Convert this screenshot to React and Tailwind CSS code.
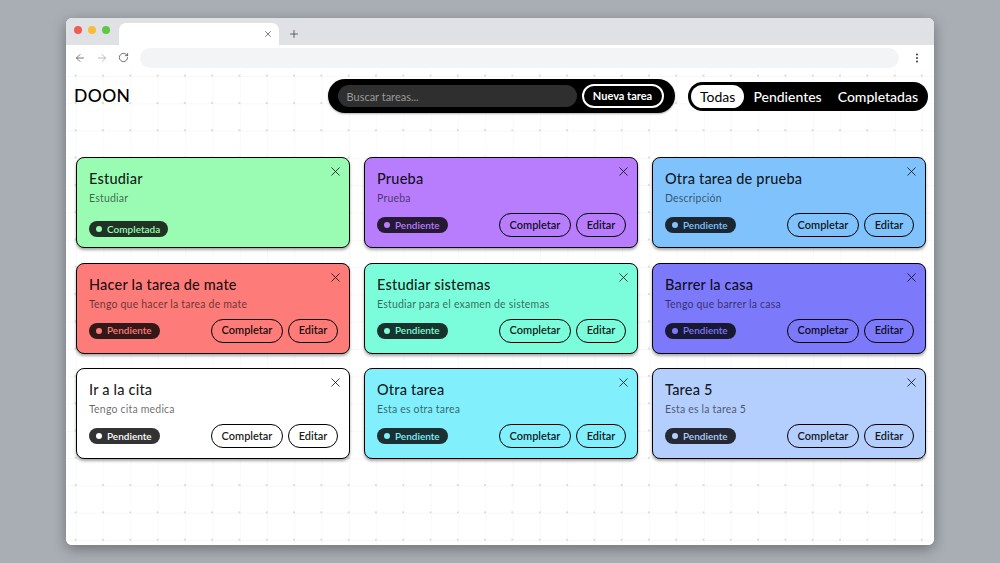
import React from 'react';
import { ArrowLeft, ArrowRight, RotateCw, X, Plus, EllipsisVertical } from 'lucide-react';

const tasks = [
  { title: 'Estudiar', desc: 'Estudiar', done: true, bg: 'bg-[#9afbb2]', accent: 'text-[#9afbb2]', dot: 'bg-[#9afbb2]' },
  { title: 'Prueba', desc: 'Prueba', bg: 'bg-[#b77dfc]', accent: 'text-[#b77dfc]', dot: 'bg-[#b77dfc]' },
  { title: 'Otra tarea de prueba', desc: 'Descripción', bg: 'bg-[#80c3fc]', accent: 'text-[#80c3fc]', dot: 'bg-[#80c3fc]' },
  { title: 'Hacer la tarea de mate', desc: 'Tengo que hacer la tarea de mate', bg: 'bg-[#fd7b79]', accent: 'text-[#fd7b79]', dot: 'bg-[#fd7b79]' },
  { title: 'Estudiar sistemas', desc: 'Estudiar para el examen de sistemas', bg: 'bg-[#7bfcda]', accent: 'text-[#7bfcda]', dot: 'bg-[#7bfcda]' },
  { title: 'Barrer la casa', desc: 'Tengo que barrer la casa', bg: 'bg-[#7c79fb]', accent: 'text-[#7c79fb]', dot: 'bg-[#7c79fb]' },
  { title: 'Ir a la cita', desc: 'Tengo cita medica', bg: 'bg-white', accent: 'text-white', dot: 'bg-white' },
  { title: 'Otra tarea', desc: 'Esta es otra tarea', bg: 'bg-[#81effc]', accent: 'text-[#81effc]', dot: 'bg-[#81effc]' },
  { title: 'Tarea 5', desc: 'Esta es la tarea 5', bg: 'bg-[#b4cefd]', accent: 'text-[#b4cefd]', dot: 'bg-[#b4cefd]' },
];

const TaskCard = ({ task }) => (
  <div className={`${task.bg} h-[91px] rounded-[8px] border border-black shadow-[0_2px_3px_rgba(0,0,0,0.35)] pl-[12px] pr-[11px] pt-[11px] pb-[10px] flex flex-col`}>
    <div className="flex justify-between items-start">
      <h3 className="text-[14.5px] leading-[20px] font-medium text-black/90 tracking-[0.2px]">{task.title}</h3>
      <X size={15} strokeWidth={1.5} className="-mt-[5px] -mr-[5px] text-black/80" />
    </div>
    <p className="text-[10.5px] leading-[14px] mt-[2px] text-black/60 tracking-[0.2px]">{task.desc}</p>
    <div className="mt-auto flex items-center justify-between">
      <span className={`h-[16px] rounded-full bg-black/80 ${task.accent} flex items-center gap-[5px] pl-[7px] pr-[8px] text-[10px] font-semibold`}>
        <span className={`w-[6px] h-[6px] rounded-full ${task.dot}`} />
        {task.done ? 'Completada' : 'Pendiente'}
      </span>
      {!task.done && (
        <div className="flex gap-[5px]">
          <button className="h-[24px] w-[72px] rounded-full border-[1.5px] border-black text-[11px] font-semibold text-black/90">Completar</button>
          <button className="h-[24px] w-[50px] rounded-full border-[1.5px] border-black text-[11px] font-semibold text-black/90">Editar</button>
        </div>
      )}
    </div>
  </div>
);

const App = () => {
  return (
    <div className="w-[1000px] h-[563px] bg-[#a9aeb5] pt-[18px] pl-[66px] overflow-hidden font-['Lato','Liberation_Sans',sans-serif]">
      <div className="w-[868px] h-[527px] rounded-[6px] overflow-hidden bg-white shadow-[0_4px_14px_rgba(0,0,0,0.35)] flex flex-col">
        {/* tab strip */}
        <div className="h-[27px] bg-[#dfe1e5] flex items-end pl-[8px]">
          <div className="flex items-center gap-[6px] h-full pb-[3px]">
            <span className="w-[8px] h-[8px] rounded-full bg-[#ee5c54]" />
            <span className="w-[8px] h-[8px] rounded-full bg-[#f5bd3a]" />
            <span className="w-[8px] h-[8px] rounded-full bg-[#5fc649]" />
          </div>
          <div className="ml-[9px] w-[160px] h-[22px] bg-white rounded-t-[7px] flex items-center justify-end pr-[6px]">
            <X size={10} strokeWidth={1.8} className="text-[#555]" />
          </div>
          <Plus size={12} strokeWidth={1.8} className="ml-[9px] mb-[5px] text-[#555]" />
        </div>
        {/* toolbar */}
        <div className="h-[25px] bg-white flex items-center pl-[8px] pr-[11px]">
          <ArrowLeft size={12} strokeWidth={1.6} className="text-[#555]" />
          <ArrowRight size={12} strokeWidth={1.6} className="ml-[10px] text-[#aaa]" />
          <RotateCw size={11} strokeWidth={1.8} className="ml-[10px] text-[#555]" />
          <div className="ml-[11px] flex-1 h-[20px] rounded-full bg-[#f3f4f5]" />
          <EllipsisVertical size={12} strokeWidth={2.2} className="ml-[12px] text-[#444]" />
        </div>
        {/* page */}
        <div className="flex-1 bg-white bg-[radial-gradient(circle,#dcdcdc_0.8px,transparent_1.2px),linear-gradient(#f8f8f8_1px,transparent_1px),linear-gradient(90deg,#f9f9f9_1px,transparent_1px)] bg-[size:27.3px_27.3px,27.3px_27.3px,27.3px_27.3px] bg-[position:-4px_-8px,0_6px,10px_0] pt-[9px]">
          <div className="grid grid-cols-[1fr_auto_1fr] items-center pl-[8px] pr-[6px]">
            <h1 className="text-[17.5px] font-medium tracking-[0.4px] text-black">DOON</h1>
            <div className="w-[347px] h-[34px] rounded-full bg-black flex items-center pl-[10px] pr-[11px] gap-[5px] shadow-[0_1px_2px_rgba(0,0,0,0.3)]">
              <input
                placeholder="Buscar tareas..."
                className="flex-1 h-[22px] rounded-full bg-[#2f2f2f] px-[9px] text-[11px] text-white placeholder:text-[#9a9a9a] outline-none"
              />
              <button className="h-[24px] w-[82px] rounded-full border-2 border-white text-white text-[11px] font-bold">Nueva tarea</button>
            </div>
            <div className="justify-self-end h-[29px] rounded-full bg-black flex items-center pl-[3px] pr-[10px] gap-[9px]">
              <span className="h-[23px] px-[9px] rounded-full bg-white text-black text-[14px] flex items-center">Todas</span>
              <span className="text-white text-[14px] font-medium">Pendientes</span>
              <span className="ml-[7px] text-white text-[14px] font-medium">Completadas</span>
            </div>
          </div>
          <div className="grid grid-cols-3 gap-x-[14px] gap-y-[14.5px] pl-[10px] pr-[8px] mt-[44px]">
            {tasks.map((t) => (
              <TaskCard key={t.title} task={t} />
            ))}
          </div>
        </div>
      </div>
    </div>
  );
};

export default App;
